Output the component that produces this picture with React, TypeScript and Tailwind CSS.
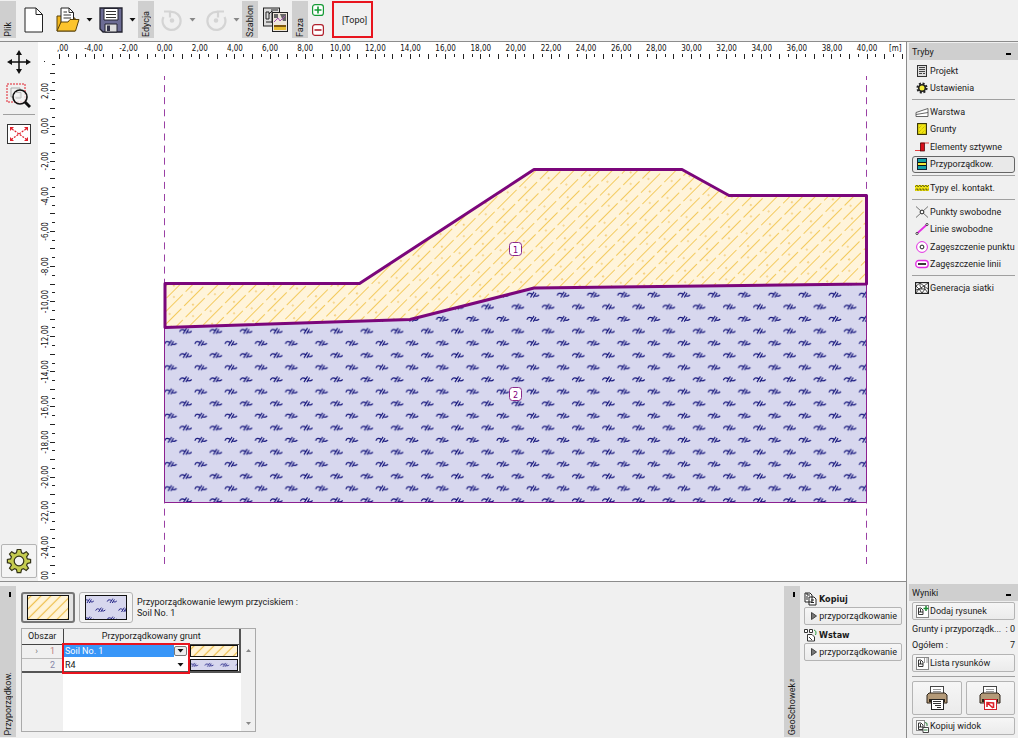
import React from "react";

const X0 = 164.7;
const Y0 = 126;
const UNIT = 17.56;

function Hatch({ id, solid = false }: { id: string; solid?: boolean }) {
  if (solid) {
    return (
      <pattern id={id} width="14" height="7" patternUnits="userSpaceOnUse" patternTransform="rotate(-45)">
        <rect width="14" height="7" fill="#fff4d8" />
        <path d="M0 3.500H14" stroke="#efbe48" strokeWidth="1.200" />
      </pattern>
    );
  }
  return (
    <pattern id={id} width="31" height="27" patternUnits="userSpaceOnUse" patternTransform="rotate(-45)">
      <rect width="31" height="27" fill="#fff4da" />
      <path d="M0 4.500H27M-13 13.500H14M18 13.500H45M-24 22.500H3M7 22.500H34" stroke="#f3ca5e" strokeWidth="1" />
      <circle cx="6" cy="9" r="0.8" fill="#eeb53c" />
      <circle cx="22" cy="18" r="0.8" fill="#eeb53c" />
      <circle cx="14" cy="0.9" r="0.8" fill="#eeb53c" />
    </pattern>
  );
}

const SQUIGGLE =
  "M-6 0.800Q-5 -1.800 -3.500 -1.500T-1 -0.800M-2.500 2.500L1 -3M0.300 2.500L3 -2M1.800 1Q4 2 6 0";

function Rock({ id, x, y, w, h, s = 1 }: { id: string; x: number; y: number; w: number; h: number; s?: number }) {
  const spots = [[w / 2, h / 2], [0, 0], [w, 0], [0, h], [w, h]];
  return (
    <pattern id={id} x={x} y={y} width={w} height={h} patternUnits="userSpaceOnUse">
      <rect width={w} height={h} fill="#d7d7ee" />
      <g stroke="#10107a" strokeWidth="1.150" fill="none">
        {spots.map(([a, b], i) => (
          <path key={i} d={SQUIGGLE} transform={`translate(${a} ${b}) scale(${s})`} />
        ))}
      </g>
    </pattern>
  );
}

function label(n: number) {
  return n.toFixed(2).replace(".", ",");
}

function RegionMark({ x, y, text }: { x: number; y: number; text: string }) {
  return (
    <g>
      <rect x={x - 6} y={y - 6.5} width="12" height="13" rx="3" fill="#fff" stroke="#8a2a8a" />
      <text x={x} y={y + 3.5} textAnchor="middle" fontSize="9" fill="#800080">{text}</text>
    </g>
  );
}

function Canvas() {
  const xt = Array.from({ length: 97 }, (_, i) => -6 + i * 0.5);
  const yt = Array.from({ length: 60 }, (_, i) => 3.5 - i * 0.5);
  const xl = Array.from({ length: 23 }, (_, i) => -4 + i * 2);
  const yl = Array.from({ length: 14 }, (_, i) => 2 - i * 2);
  return (
    <svg viewBox="38 42 868 539" className="block h-full w-full bg-white font-['DejaVu_Sans_Condensed','DejaVu_Sans',sans-serif]" preserveAspectRatio="xMinYMin slice" role="img" aria-label="Model">
      <defs>
        <Hatch id="hatch" />
        <Rock id="rock" x={170.6} y={319} w={30.2} h={24.2} />
      </defs>
      <g stroke="#222" strokeWidth="1" shapeRendering="crispEdges">
        {xt.map((v) => (
          <line key={v} x1={X0 + v * UNIT} x2={X0 + v * UNIT} y1="54" y2={v % 1 ? 57 : 59} />
        ))}
        {yt.map((v) => (
          <line key={v} y1={Y0 - v * UNIT} y2={Y0 - v * UNIT} x1={v % 1 ? 52 : 50} x2="55" />
        ))}
      </g>
      <rect x="44" y="61" width="1" height="1" fill="#222" />
      <g fontSize="8" fill="#111">
        <text x="57" y="51">,00</text>
        {xl.map((v) => (
          <text key={v} x={X0 + v * UNIT - (v < 0 ? 1 : 0)} y="51" textAnchor="middle">{label(v)}</text>
        ))}
        <text x="889" y="51">[m]</text>
        {yl.map((v) => (
          <text key={v} transform={`translate(48 ${Y0 - v * UNIT}) rotate(-90)`} textAnchor="middle">{label(v)}</text>
        ))}
        <text transform="translate(48 580) rotate(-90)">00</text>
      </g>
      <path d="M164.500 76V564M866.500 76V564" stroke="#9a40a4" strokeWidth="1" strokeDasharray="7 5.100" strokeDashoffset="3" />
      <path d="M164.500 327.500L410 319L534 288L866.500 284V502.500H164.500Z" fill="url(#rock)" stroke="#8c2090" strokeWidth="1" />
      <path d="M165 283.500H359.500L534 169.500H682L729 195.500H866.500V284L534 288L410 319.500L165 327.500Z" fill="url(#hatch)" stroke="#7b067b" strokeWidth="3" strokeLinejoin="round" />
      <RegionMark x={515.5} y={249} text="1" />
      <RegionMark x={515.5} y={394} text="2" />
    </svg>
  );
}

function VLabel({ children }: { children: React.ReactNode }) {
  return (
    <div className="flex w-4 shrink-0 items-end bg-[#cfcfcf] pb-px">
      <span className="w-4 rotate-180 leading-4 whitespace-nowrap [writing-mode:vertical-rl]">{children}</span>
    </div>
  );
}

function Caret({ dim = false }: { dim?: boolean }) {
  return (
    <svg width="7" height="4" viewBox="0 0 7 4" className="shrink-0">
      <path d="M0.500 0H6.500L3.500 3.500Z" fill={dim ? "#888" : "#111"} />
    </svg>
  );
}

function Undo({ flip = false }: { flip?: boolean }) {
  return (
    <svg width="22" height="24" viewBox="0 0 22 24" fill="none">
      <g transform={flip ? "translate(22 0) scale(-1 1)" : undefined} stroke="#d4d4d4" strokeWidth="2.200">
        <path d="M9.500 4A9 9 0 1 1 2.500 9" />
        <path d="M3 3.500H9V9.500" />
        <circle cx="11" cy="12.500" r="1.200" fill="#d4d4d4" />
      </g>
    </svg>
  );
}

function Toolbar() {
  return (
    <header className="flex h-[42px] shrink-0 border-b border-[#8c8c8c] bg-[#f0f0f0] pt-px pb-[3px]">
      <VLabel>Plik</VLabel>
      <div className="flex w-[122px] shrink-0 items-center justify-between pr-[2px] pl-2">
        <button aria-label="Nowy" className="shrink-0">
          <svg width="20" height="26" viewBox="0 0 20 26">
            <path d="M1 1H12L18.500 7.500V25H1Z" fill="#fff" stroke="#222" />
            <path d="M12 1V7.500H18.500" fill="none" stroke="#222" />
          </svg>
        </button>
        <div className="flex gap-[6px]">
          <button aria-label="Otwórz" className="flex items-center gap-[6px]">
            <svg width="24" height="26" viewBox="0 0 24 26">
              <path d="M1 24V9H5L7 11H19V24Z" fill="#f3b71c" stroke="#5a4208" />
              <path d="M5 18V1H13L17.500 5.500V18Z" fill="#fff" stroke="#222" />
              <path d="M13 1V5.500H17.500M7.500 5H11M7.500 8H15M7.500 11H15" fill="none" stroke="#333" />
              <path d="M1 24L5 15H12L14 12.500H23L19.500 24Z" fill="#fcc42c" stroke="#5a4208" />
            </svg>
            <Caret />
          </button>
          <button aria-label="Zapisz" className="flex items-center gap-[6px]">
            <svg width="24" height="26" viewBox="0 0 24 26">
              <path d="M1 1H23V25H4L1 22Z" fill="#6c6c94" stroke="#22222e" strokeWidth="1.300" />
              <path d="M5 1.500H19V13H5Z" fill="#fff" stroke="#22222e" />
              <path d="M7 4.500H17M7 7.500H17M7 10.500H17" stroke="#333" />
              <path d="M6 17H18V25H6Z" fill="#ddd" stroke="#22222e" />
              <path d="M8 18.500H11V24H8Z" fill="#34344a" />
            </svg>
            <Caret />
          </button>
        </div>
      </div>
      <VLabel>Edycja</VLabel>
      <div className="flex w-[88px] shrink-0 items-center justify-between pr-[2px] pl-[7px]">
        <button aria-label="Cofnij" className="flex items-center gap-[6px]"><Undo /><Caret dim /></button>
        <button aria-label="Ponów" className="flex items-center gap-[6px]"><Undo flip /><Caret dim /></button>
      </div>
      <VLabel>Szablon</VLabel>
      <div className="flex w-[34px] shrink-0 items-center justify-center">
        <button aria-label="Szablon">
          <svg width="25" height="25" viewBox="0 0 25 25">
            <rect x="0.500" y="1" width="16" height="18" fill="#ddd" stroke="#222" />
            <path d="M3 5H6V12H3ZM3 15H9M8 3H15M6 7L9 4V16" fill="none" stroke="#222" />
            <rect x="9.500" y="5.500" width="15" height="19" fill="#eee6da" stroke="#222" />
            <path d="M11 7H15V11H11ZM17 7H23V14H20Z" fill="#666" />
            <path d="M11 15L15 11L17 14L22 9" stroke="#a050b0" fill="none" />
            <rect x="11" y="18" width="12" height="2" fill="#7a5510" />
            <rect x="11" y="20" width="12" height="3" fill="#e8bd30" />
          </svg>
        </button>
      </div>
      <VLabel>Faza</VLabel>
      <div className="flex w-[24px] shrink-0 flex-col items-center justify-between pt-[3px] pr-[4px] pb-[2px]">
        <button aria-label="Dodaj fazę">
          <svg width="12" height="12" viewBox="0 0 12 12" className="block"><rect x="0.600" y="0.600" width="10.800" height="10.800" rx="2.500" fill="#fff" stroke="#159a35" strokeWidth="1.200" /><path d="M2.500 6H9.500M6 2.500V9.500" stroke="#159a35" strokeWidth="1.600" /></svg>
        </button>
        <button aria-label="Usuń fazę">
          <svg width="12" height="12" viewBox="0 0 12 12" className="block"><rect x="0.600" y="0.600" width="10.800" height="10.800" rx="2.500" fill="#fff" stroke="#b0202c" strokeWidth="1.200" /><path d="M2.500 6H9.500" stroke="#b0202c" strokeWidth="1.600" /></svg>
        </button>
      </div>
      <button className="w-[41px] shrink-0 border-2 border-[#e8141e] pl-1">[Topo]</button>
    </header>
  );
}

const P = "shrink-0";
const icons: Record<string, React.ReactNode> = {
  projekt: <svg className={P} width="14" height="12" viewBox="0 0 14 12"><rect x="2.500" y="0.500" width="9" height="11" fill="#ddd" stroke="#333" /><path d="M4 2.500H10M4 4.500H10M4 6.500H10M4 8.500H7M8 8.500H10" stroke="#444" /></svg>,
  ustawienia: <svg className={P} width="14" height="12" viewBox="0 0 14 12"><circle cx="7" cy="6" r="4.600" fill="none" stroke="#222" strokeWidth="2" strokeDasharray="2 1.610" /><circle cx="7" cy="6" r="3.300" fill="#f4ec3a" stroke="#222" strokeWidth="1.600" /></svg>,
  warstwa: <svg className={P} width="14" height="12" viewBox="0 0 14 12"><path d="M1 6.500L13 2.500V10.500H1ZM1 8.500L13 6.500" fill="#fff" stroke="#555" strokeWidth="0.900" /></svg>,
  grunty: <svg className={P} width="14" height="12" viewBox="0 0 14 12"><rect x="2.600" y="0.600" width="8.800" height="10.800" fill="#f1e512" stroke="#332f00" strokeWidth="1.100" /><path d="M4 5L7 2M4 9L10 3M7 10L10 7" stroke="#b9a800" strokeDasharray="1 1" /></svg>,
  elementy: <svg className={P} width="14" height="12" viewBox="0 0 14 12"><path d="M0 9.500H6V2H14" fill="none" stroke="#e04040" /><rect x="5.500" y="2" width="4" height="8" fill="#d8101c" stroke="#400" strokeWidth="0.700" /></svg>,
  przyp: <svg className={P} width="14" height="12" viewBox="0 0 14 12"><rect x="2.500" y="0.500" width="9" height="11" fill="#f1e83a" stroke="#123" /><rect x="3" y="1" width="8" height="3" fill="#16a0a8" /><rect x="3" y="8" width="8" height="3" fill="#16a0a8" /><path d="M3 4.500H11M3 7.500H11" stroke="#111" /></svg>,
  typy: <svg className={P} width="14" height="12" viewBox="0 0 14 12"><rect x="0" y="3" width="14" height="6" fill="#f1e512" /><path d="M0 5L2 3L3 5L5 3L6 5L8 3L9 5L11 3L12 5L14 3M0 8.500L2 6.500L3 8.500L5 6.500L6 8.500L8 6.500L9 8.500L11 6.500L12 8.500L14 6.500" fill="none" stroke="#555010" strokeWidth="0.800" /></svg>,
  punkty: <svg className={P} width="14" height="12" viewBox="0 0 14 12"><path d="M1 0.500L13 11.500M13 0.500L1 11.500" stroke="#666" strokeWidth="0.900" /><circle cx="7" cy="6" r="1.900" fill="#fff" stroke="#222" /></svg>,
  linie: <svg className={P} width="14" height="12" viewBox="0 0 14 12"><path d="M2 10.500L12 1.500" stroke="#e22be2" strokeWidth="1.700" /><circle cx="2" cy="10.500" r="1.100" fill="#fff" stroke="#222" strokeWidth="0.800" /><circle cx="12" cy="1.500" r="1.100" fill="#fff" stroke="#222" strokeWidth="0.800" /></svg>,
  zagp: <svg className={P} width="14" height="12" viewBox="0 0 14 12"><circle cx="7" cy="6" r="5.400" fill="#fff" stroke="#e22be2" /><circle cx="7" cy="6" r="1.900" fill="#fff" stroke="#222" /></svg>,
  zagl: <svg className={P} width="14" height="12" viewBox="0 0 14 12"><rect x="0.800" y="2.500" width="12.400" height="7" rx="3" fill="#fff" stroke="#e22be2" strokeWidth="1.300" /><path d="M3 6H11" stroke="#222" strokeWidth="1.800" /></svg>,
  siatka: <svg className={P} width="14" height="12" viewBox="0 0 14 12"><rect x="0.600" y="0.600" width="12.800" height="10.800" fill="#fff" stroke="#222" strokeWidth="1.200" /><path d="M1 4L5 1L9 4L13 1M1 4L4 7L9 4L13 7M1 8L4 7L7 11L10 7L13 11M1 11L4 7L10 7L9 4M5 1V4L7 7" fill="none" stroke="#333" strokeWidth="0.900" /></svg>,
};

const groups: { size: string; items: [string, string][] }[] = [
  { size: "h-[35px]", items: [["projekt", "Projekt"], ["ustawienia", "Ustawienia"]] },
  { size: "h-[70px]", items: [["warstwa", "Warstwa"], ["grunty", "Grunty"], ["elementy", "Elementy sztywne"], ["przyp", "Przyporządkow."]] },
  { size: "h-[18px]", items: [["typy", "Typy el. kontakt."]] },
  { size: "h-[70px]", items: [["punkty", "Punkty swobodne"], ["linie", "Linie swobodne"], ["zagp", "Zagęszczenie punktu"], ["zagl", "Zagęszczenie linii"]] },
  { size: "h-[18px]", items: [["siatka", "Generacja siatki"]] },
];

function PanelTitle({ children }: { children: React.ReactNode }) {
  return (
    <div className="ml-px flex h-[17px] items-center justify-between bg-[#cfcfcf] pr-[7px] pl-[3px]">
      <h2>{children}</h2>
      <button aria-label="Zwiń" className="mt-1 h-[2px] w-[5px] bg-black" />
    </div>
  );
}

const BTN = "flex items-center rounded-[2px] border border-[#b4b4b4] bg-linear-to-b from-[#f6f6f6] to-[#ebebeb] whitespace-nowrap";

function PicIcon({ kind }: { kind: "plus" | "list" | "copy" }) {
  return (
    <svg width="13" height="13" viewBox="0 0 13 13" className="shrink-0">
      <rect x="0.500" y="0.500" width={kind === "copy" ? 8 : 12} height={kind === "copy" ? 10 : 12} fill="#fff" stroke="#888" />
      <path d="M2.500 9.500V3H5L7 5V9.500ZM2.500 7H7M4.500 4V7" fill="none" stroke="#222" strokeWidth="0.900" />
      {kind === "plus" && <path d="M7.500 3.500H12.500M10 1V6" stroke="#188a30" strokeWidth="1.500" />}
      {kind === "list" && <path d="M8.500 1.500V6M11 1.500V6" stroke="#333" strokeDasharray="1 1" />}
      {kind === "copy" && <><path d="M9 2.500Q12 2.500 11 6" fill="none" stroke="#287a38" /><path d="M7 7.500H12.500V12.500H7Z" fill="#fff" stroke="#444" /><path d="M8 10H11.500" stroke="#287a38" /></>}
    </svg>
  );
}

function Printer({ pdf = false }: { pdf?: boolean }) {
  return (
    <svg width="22" height="26" viewBox="0 0 22 26">
      <rect x="4.500" y="1.500" width="13" height="10" fill="#fff" stroke="#444" />
      <path d="M7 4.500H15M7 6.500H15" stroke="#999" />
      <path d="M3 8H19L21 10V18H1V10Z" fill="#b49a78" stroke="#2c2318" />
      <path d="M3 14H19V17H3Z" fill="#2c2318" />
      <rect x="5.500" y="14.500" width="12" height="10" fill="#fff" stroke={pdf ? "#d02028" : "#222"} />
      {pdf ? (
        <path d="M8 22V17.500L14.500 18V23M8 17.500L14 23" fill="none" stroke="#e02028" strokeWidth="1.600" />
      ) : (
        <path d="M7 16.500H15M7 18.500H15M9 20.500H15M11 22.500H15" stroke="#333" />
      )}
    </svg>
  );
}

function Sidebar() {
  return (
    <aside className="flex w-[112px] shrink-0 flex-col border-l border-[#8c8c8c] bg-[#f0f0f0] pt-px pl-px">
      <PanelTitle>Tryby</PanelTitle>
      <nav className="pt-[2px] pr-[3px] pl-1">
        {groups.map((g, i) => (
          <div key={i} className={i ? "pt-[2px]" : ""}>
            {i > 0 && <hr className="mb-[3px] border-[#a0a0a0]" />}
            <div className={`flex flex-col ${g.size}`}>
              {g.items.map(([id, text]) => (
                <button
                  key={id}
                  className={`flex flex-1 items-center gap-px rounded-[3px] border pl-[2px] whitespace-nowrap ${id === "przyp" ? "border-[#666] bg-[#e9e9e9]" : "border-transparent"}`}
                >
                  {icons[id]}
                  {text}
                </button>
              ))}
            </div>
          </div>
        ))}
      </nav>
      <div className="mt-auto pb-[3px]">
        <PanelTitle>Wyniki</PanelTitle>
        <div className="flex flex-col pt-px pr-[3px] pl-[4px]">
          <button className={`${BTN} h-[18px] gap-px pl-[3px]`}><PicIcon kind="plus" />Dodaj rysunek</button>
          <dl className="flex flex-col py-px">
            <div className="flex h-4 items-center justify-between whitespace-nowrap"><dt>Grunty i przyporządk...</dt><dd>: 0</dd></div>
            <div className="flex h-4 items-center justify-between"><dt>Ogółem :</dt><dd>7</dd></div>
          </dl>
          <button className={`${BTN} h-[18px] gap-px pl-[3px]`}><PicIcon kind="list" />Lista rysunków</button>
          <hr className="mt-1 mb-1 border-[#a0a0a0]" />
          <div className="grid grid-cols-2 gap-1">
            <button aria-label="Drukuj" className={`${BTN} h-[34px] justify-center`}><Printer /></button>
            <button aria-label="Drukuj do PDF" className={`${BTN} h-[34px] justify-center`}><Printer pdf /></button>
          </div>
          <button className={`${BTN} mt-[2px] h-[18px] gap-px pl-[3px]`}><PicIcon kind="copy" />Kopiuj widok</button>
        </div>
      </div>
    </aside>
  );
}

function Tools() {
  return (
    <div className="flex w-[38px] shrink-0 flex-col items-center bg-[#f0f0f0] pt-2 pr-px">
      <button aria-label="Przesuń">
        <svg width="24" height="24" viewBox="0 0 24 24"><path d="M12 3V21M3 12H21" stroke="#111" strokeWidth="1.500" /><path d="M12 0L15 5H9ZM12 24L15 19H9ZM0 12L5 9V15ZM24 12L19 9V15Z" fill="#111" /></svg>
      </button>
      <button aria-label="Powiększ" className="mt-[9px]">
        <svg width="25" height="26" viewBox="0 0 25 26"><rect x="1" y="1" width="18" height="18" fill="none" stroke="#e0202c" strokeDasharray="2 1" /><path d="M5 5H14V14H5Z" fill="none" stroke="#aaa" /><circle cx="14" cy="14" r="7" fill="#f4f4f4" fillOpacity="0.800" stroke="#111" strokeWidth="1.600" /><path d="M9.500 9.500H15V15H9.500" fill="none" stroke="#bbb" /><path d="M19 19L24 24" stroke="#111" strokeWidth="3" /></svg>
      </button>
      <hr className="mt-[5px] w-8 border-[#a0a0a0]" />
      <button aria-label="Pokaż wszystko" className="mt-[9px]">
        <svg width="24" height="20" viewBox="0 0 24 20"><rect x="0.500" y="0.500" width="23" height="19" fill="#fff" stroke="#333" /><path d="M5 5L19 15M19 5L5 15" stroke="#e0202c" strokeDasharray="2 1.200" strokeWidth="1.200" /><path d="M3 3H7L3 7ZM21 3V7L17 3ZM3 17V13L7 17ZM21 17H17L21 13Z" fill="#e0202c" /></svg>
      </button>
      <button aria-label="Ustawienia widoku" className="mt-auto mb-[3px] rounded-[2px] border border-[#b4b4b4] bg-[#f4f4f4] px-1 py-[3px]">
        <svg width="26" height="26" viewBox="0 0 26 26">
          <path
            d="M11.200 1.500H14.800L15.600 4.800L17.500 5.600L20.300 3.700L22.500 6L20.600 8.900L21.400 10.900L24.600 11.500V14.700L21.400 15.400L20.600 17.300L22.500 20.200L20.200 22.400L17.400 20.600L15.600 21.400L14.800 24.700H11.200L10.400 21.400L8.600 20.600L5.800 22.400L3.500 20.200L5.400 17.300L4.600 15.400L1.400 14.700V11.500L4.600 10.900L5.400 8.900L3.500 6L5.700 3.700L8.500 5.600L10.400 4.800Z"
            fill="#c5cc50" stroke="#333318" strokeWidth="1.200"
          />
          <circle cx="13" cy="13" r="4.800" fill="#f4f4f4" stroke="#333318" strokeWidth="1.200" />
        </svg>
      </button>
    </div>
  );
}

function Swatch({ w, h, id, children }: { w: number; h: number; id: string; children: React.ReactNode }) {
  return (
    <svg width={w} height={h} viewBox={`0 0 ${w} ${h}`} className="block">
      <defs>{children}</defs>
      <rect x="0.500" y="0.500" width={w - 1} height={h - 1} fill={`url(#${id})`} stroke="#111" />
    </svg>
  );
}

function SoilSelect({ value, active, name }: { value: string; active?: boolean; name: string }) {
  return (
    <div className="flex h-3 items-center pr-[3px]">
      <select
        aria-label={name}
        defaultValue={value}
        className={`h-3 min-w-0 flex-1 appearance-none pl-[2px] leading-3 outline-none ${active ? "bg-[#3896f8] text-white" : "bg-white"}`}
      >
        <option>Soil No. 1</option>
        <option>R4</option>
      </select>
      <span className={`flex h-[10px] w-[13px] items-center justify-center rounded-[2px] border ${active ? "border-[#777] bg-[#eee]" : "border-transparent"}`}><Caret /></span>
    </div>
  );
}

function BottomPanel() {
  return (
    <section className="flex h-[157px] shrink-0 border-t border-[#8c8c8c] bg-[#f0f0f0] pt-1 pb-px">
      <div className="flex w-4 shrink-0 flex-col items-center justify-between bg-[#cfcfcf] pt-[6px] pb-[2px]">
        <button aria-label="Zwiń panel" className="ml-1 h-[5px] w-[2px] bg-black" />
        <span className="rotate-180 leading-4 whitespace-nowrap [writing-mode:vertical-rl]">Przyporządkow.</span>
      </div>
      <div className="min-w-0 flex-1 pt-[6px] pl-[5px]">
        <div className="flex items-center gap-[4px]">
          <button aria-label="Soil No. 1" className="rounded-[3px] border-2 border-[#777] bg-[#e4e4e4] px-1 py-px">
            <Swatch w={42} h={25} id="s1"><Hatch id="s1" solid /></Swatch>
          </button>
          <button aria-label="R4" className="rounded-[3px] border border-[#b4b4b4] bg-[#f4f4f4] px-[5px] py-[2px]">
            <Swatch w={42} h={25} id="s2"><Rock id="s2" x={4} y={6} w={23} h={18} s={0.8} /></Swatch>
          </button>
          <p className="leading-[11px]">Przyporządkowanie lewym przyciskiem :<br />Soil No. 1</p>
        </div>
        <div className="relative mt-[5px] flex h-[104px] w-[235px] border border-[#aaa]">
          <div className="w-[219px] bg-linear-to-r from-[#f0f0f0] from-[41px] to-white to-[41px]">
            <table className="w-full table-fixed border-collapse">
              <colgroup>
                <col className="w-[41px]" />
                <col className="w-[127px]" />
                <col />
              </colgroup>
              <thead>
                <tr className="h-[15px] border-b border-[#444] bg-[#f0f0f0] text-center">
                  <th className="border-r border-[#444] font-normal">Obszar</th>
                  <th colSpan={2} className="border-r-2 border-[#555] font-normal">Przyporządkowany grunt</th>
                </tr>
              </thead>
              <tbody>
                <tr className="h-[14px]">
                  <td className="border-b border-[#bbb] bg-[#f0f0f0] pr-2 text-right leading-3 text-[#c08080]"><span className="mr-3 text-[#777]">›</span>1</td>
                  <td><SoilSelect name="Obszar 1" value="Soil No. 1" active /></td>
                  <td className="border-r-2 border-[#555]"><Swatch w={48} h={12} id="s3"><Hatch id="s3" solid /></Swatch></td>
                </tr>
                <tr className="h-[14px] border-b-2 border-[#555]">
                  <td className="bg-[#f0f0f0] pr-2 text-right leading-3 text-[#8888a8]">2</td>
                  <td><SoilSelect name="Obszar 2" value="R4" /></td>
                  <td className="border-r-2 border-[#555]"><Swatch w={48} h={12} id="s4"><Rock id="s4" x={-4} y={-24} w={15.5} h={60} s={0.7} /></Swatch></td>
                </tr>
              </tbody>
            </table>
          </div>
          <div className="flex flex-1 flex-col items-center justify-between pt-[20px] pb-[6px]">
            <svg width="5" height="3" viewBox="0 0 5 3"><path d="M0 3L2.500 0L5 3Z" fill="#888" /></svg>
            <svg width="5" height="3" viewBox="0 0 5 3"><path d="M0 0L2.500 3L5 0Z" fill="#888" /></svg>
          </div>
          <div className="pointer-events-none absolute top-[14px] left-10 h-[31px] w-[128px] border-2 border-[#e8141e]" />
        </div>
      </div>
      <div className="flex w-4 shrink-0 flex-col items-center justify-between bg-[#cfcfcf] pt-[6px] pb-[2px]">
        <button aria-label="Zwiń schowek" className="ml-1 h-[5px] w-[2px] bg-black" />
        <span className="rotate-180 leading-4 whitespace-nowrap [writing-mode:vertical-rl]">GeoSchowek™</span>
      </div>
      <div className="w-[106px] shrink-0 pt-[5px] pl-1">
        {["Kopiuj", "Wstaw"].map((t) => (
          <div key={t} className="h-9 w-[98px]">
            <h3 className="flex h-4 items-center gap-[2px] font-['DejaVu_Sans_Condensed','DejaVu_Sans',sans-serif] font-bold">
              <svg width="13" height="14" viewBox="0 0 13 14" className="shrink-0">
                {t === "Kopiuj" ? (
                  <path d="M1 1H6L8 3V10H1ZM5 5H10L12 7V13H5ZM3 4V8M7 8H10M7 10.500H10M3 1V3H6" fill="#fff" stroke="#222" />
                ) : (
                  <g fill="none" stroke="#333"><path d="M0.500 1.500H3.500V4.500H0.500ZM5.500 1.500H8.500V4.500H5.500ZM3.500 6.500H8L10.500 9V13H3.500ZM5 9L8 12" fill="#fff" /><path d="M10 2Q13 3 11.500 7" stroke="#2a9a3c" /></g>
                )}
              </svg>
              {t}
            </h3>
            <button className={`${BTN} h-[18px] w-full justify-between px-[4px]`}>
              <svg width="6" height="8" viewBox="0 0 6 8" className="ml-[2px] shrink-0"><path d="M0.500 0.500L5.500 4L0.500 7.500Z" fill="#777" stroke="#444" /></svg>
              przyporządkowanie
            </button>
          </div>
        ))}
      </div>
    </section>
  );
}

export default function App() {
  return (
    <div className="min-h-screen bg-white pr-[5px] pb-px font-[Roboto,'DejaVu_Sans_Condensed',sans-serif] text-[9px] leading-3 text-[#1a1a1a]">
      <div className="flex min-h-[calc(100vh-1px)] flex-col">
        <Toolbar />
        <div className="flex flex-1">
          <main className="flex min-w-0 flex-1 flex-col">
            <div className="flex flex-1">
              <Tools />
              <div className="relative min-w-0 flex-1">
                <div className="absolute inset-0"><Canvas /></div>
              </div>
            </div>
            <BottomPanel />
          </main>
          <Sidebar />
        </div>
      </div>
    </div>
  );
}
